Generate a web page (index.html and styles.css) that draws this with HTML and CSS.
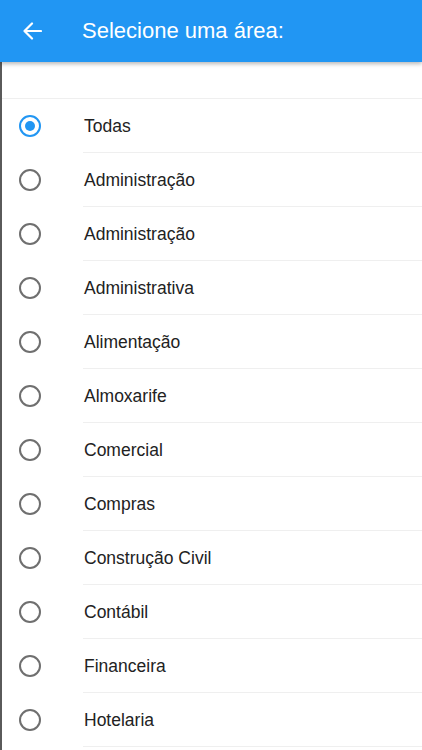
FILE: index.html
```html
<!DOCTYPE html>
<html>
<head>
<meta charset="utf-8">
<link rel="stylesheet" href="styles.css">
</head>
<body>
<header class="appbar">
  <svg class="back" width="20" height="18" viewBox="0 0 20 18"><path d="M19 9H2.5M10 1.5L2.5 9l7.5 7.5" fill="none" stroke="#fff" stroke-width="2.2" stroke-linecap="round" stroke-linejoin="round"/></svg>
  <h1 class="title">Selecione uma área:</h1>
</header>
<main class="content">
  <div class="spacer"></div>
  <ul class="list">
    <li class="row"><span class="radio on"></span><span class="label">Todas</span></li>
    <li class="row"><span class="radio"></span><span class="label">Administração</span></li>
    <li class="row"><span class="radio"></span><span class="label">Administração</span></li>
    <li class="row"><span class="radio"></span><span class="label">Administrativa</span></li>
    <li class="row"><span class="radio"></span><span class="label">Alimentação</span></li>
    <li class="row"><span class="radio"></span><span class="label">Almoxarife</span></li>
    <li class="row"><span class="radio"></span><span class="label">Comercial</span></li>
    <li class="row"><span class="radio"></span><span class="label">Compras</span></li>
    <li class="row"><span class="radio"></span><span class="label">Construção Civil</span></li>
    <li class="row"><span class="radio"></span><span class="label">Contábil</span></li>
    <li class="row"><span class="radio"></span><span class="label">Financeira</span></li>
    <li class="row"><span class="radio"></span><span class="label">Hotelaria</span></li>
  </ul>
</main>
</body>
</html>
```
FILE: styles.css
```css
html, body {
  margin: 0;
  padding: 0;
  background: #fff;
  font-family: "Liberation Sans", Arial, sans-serif;
  overflow: hidden;
}
.appbar {
  position: relative;
  z-index: 2;
  height: 62px;
  background: #2196f3;
  display: flex;
  align-items: center;
  box-shadow: 0 2px 4px rgba(0,0,0,0.28);
}
.back {
  margin-left: 22px;
  flex: none;
}
.title {
  margin: 0 0 0 40px;
  font-size: 22px;
  font-weight: normal;
  color: #fff;
}
.content {
  border-left: 2px solid #5a5a5a;
  height: 688px;
  box-sizing: border-box;
}
.spacer {
  height: 36px;
  border-bottom: 1px solid #efefef;
}
.list {
  list-style: none;
  margin: 0;
  padding: 0;
}
.row {
  height: 54px;
  display: flex;
  align-items: center;
  position: relative;
}
.row::after {
  content: "";
  position: absolute;
  left: 81px;
  right: 0;
  bottom: 0;
  height: 1px;
  background: #efefef;
}
.radio {
  width: 18px;
  height: 18px;
  border: 2px solid #6f6f6f;
  border-radius: 50%;
  margin-left: 17px;
  box-sizing: content-box;
  flex: none;
  position: relative;
}
.radio.on {
  border-color: #2196f3;
}
.radio.on::after {
  content: "";
  position: absolute;
  left: 4px;
  top: 4px;
  width: 10px;
  height: 10px;
  border-radius: 50%;
  background: #2196f3;
}
.label {
  margin-left: 43px;
  font-size: 17.5px;
  color: #222;
}
```
